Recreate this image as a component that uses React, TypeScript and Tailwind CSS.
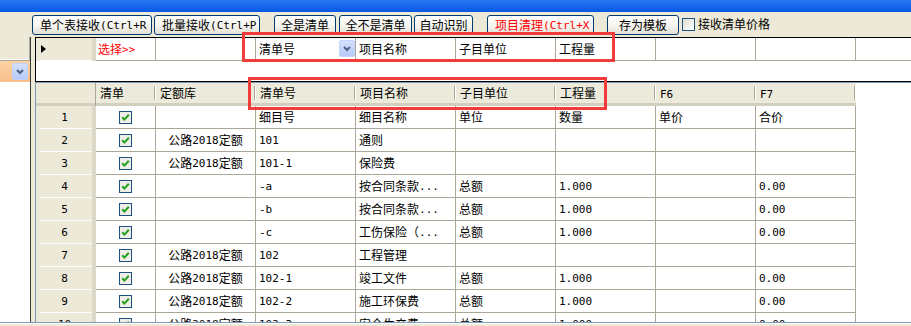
import clsx from "clsx";

type Row = {
    n: number;
    lib?: string;
    code: string;
    name: string;
    unit?: string;
    qty?: string;
    price?: string;
    total?: string;
};

const rows: Row[] = [
    { n: 1, code: "细目号", name: "细目名称", unit: "单位", qty: "数量", price: "单价", total: "合价" },
    { n: 2, lib: "公路2018定额", code: "101", name: "通则" },
    { n: 3, lib: "公路2018定额", code: "101-1", name: "保险费" },
    { n: 4, code: "-a", name: "按合同条款...", unit: "总额", qty: "1.000", total: "0.00" },
    { n: 5, code: "-b", name: "按合同条款...", unit: "总额", qty: "1.000", total: "0.00" },
    { n: 6, code: "-c", name: "工伤保险（...", unit: "总额", qty: "1.000", total: "0.00" },
    { n: 7, lib: "公路2018定额", code: "102", name: "工程管理" },
    { n: 8, lib: "公路2018定额", code: "102-1", name: "竣工文件", unit: "总额", qty: "1.000", total: "0.00" },
    { n: 9, lib: "公路2018定额", code: "102-2", name: "施工环保费", unit: "总额", qty: "1.000", total: "0.00" },
    { n: 10, lib: "公路2018定额", code: "102-3", name: "安全生产费", unit: "总额", qty: "1.000", total: "0.00" },
];

const headers = ["清单号", "项目名称", "子目单位", "工程量", "F6", "F7"];

// ascii runs get a narrow mono face, the rest stays in the CJK face
const Txt = ({ s }: { s: string }) => {
    const parts = s.split(/([\x20-\x7E]+)/).filter(Boolean);
    return (
        <>
            {parts.map((p, i) =>
                /^[\x20-\x7E]+$/.test(p) ? (
                    <span key={i} className="font-['DejaVu_Sans_Mono',monospace] text-[11px]">
                        {p}
                    </span>
                ) : (
                    <span key={i}>{p}</span>
                )
            )}
        </>
    );
};

const XpButton = ({ label, className, red, left }: { label: string; className: string; red?: boolean; left?: boolean }) => (
    <div
        className={clsx(
            "h-[20px] shrink-0 flex items-center overflow-hidden whitespace-nowrap rounded-[3px] border border-[#003C74] bg-[linear-gradient(to_bottom,#FFFFFF,#F5F4EF_55%,#E2DFD4)]",
            left ? "justify-start pl-[7px]" : "justify-center",
            red ? "text-[#FF0000]" : "text-black",
            className
        )}
    >
        <Txt s={label} />
    </div>
);

const Check = () => (
    <svg width="13" height="13" viewBox="0 0 13 13">
        <rect x="0.5" y="0.5" width="12" height="12" fill="#EFEEE6" stroke="#1C5180" />
        <path d="M3.2 6.2 L5.4 8.6 L9.8 3.8" fill="none" stroke="#21A121" strokeWidth="2" />
    </svg>
);

const DropBtn = () => (
    <div className="w-[16px] h-[17px] shrink-0 flex items-center justify-center rounded-[2px] border border-[#C3D3FD] bg-[linear-gradient(to_bottom,#D4E0FC,#B6CAF7)]">
        <svg width="10" height="8" viewBox="0 0 10 8">
            <path d="M2 2 L5 5 L8 2" fill="none" stroke="#4D6185" strokeWidth="2" />
        </svg>
    </div>
);

const RowHead = ({ children }: { children?: React.ReactNode }) => (
    <div className="w-[60px] shrink-0 flex flex-col bg-[#ECE9D8] shadow-[inset_-4px_0_0_#DCD8C8]">
        <div className="flex-1 flex items-center justify-center pr-[3px]">{children}</div>
        <div className="h-px ml-[4px] mr-[5px] bg-white" />
    </div>
);

const cell = "shrink-0 flex items-center border-r border-b border-[#ACA899] overflow-hidden whitespace-nowrap";

export default function App() {
    return (
        <div className="relative w-[911px] h-[326px] overflow-hidden bg-[#ECE9D8] flex flex-col font-['Noto_Sans_CJK_SC',sans-serif] text-[12px] leading-none text-black">
            {/* title bar */}
            <div className="h-[12px] shrink-0 bg-[linear-gradient(to_bottom,#2A78F2,#0757E4)]" />

            {/* toolbar */}
            <div className="h-[25px] shrink-0 flex items-start pt-[3px]">
                <XpButton label="单个表接收(Ctrl+R" className="w-[120px] ml-[32px]" left />
                <XpButton label="批量接收(Ctrl+P" className="w-[106px] ml-[2px]" left />
                <XpButton label="全是清单" className="w-[62px] ml-[14px]" />
                <XpButton label="全不是清单" className="w-[73px] ml-[3px]" />
                <XpButton label="自动识别" className="w-[59px] ml-[2px]" />
                <XpButton label="项目清理(Ctrl+X" className="w-[107px] ml-[14px]" red left />
                <XpButton label="存为模板" className="w-[72px] ml-[13px]" />
                <div className="ml-[3px] mt-[3px] w-[13px] h-[13px] border border-[#1C5180] bg-[linear-gradient(135deg,#DCDCD7,#FFFFFF)]" />
                <span className="ml-[3px] mt-[3px]">接收清单价格</span>
            </div>

            {/* content */}
            <div className="flex-1 min-h-0 flex">
                {/* left panel */}
                <div className="w-[31px] shrink-0 flex flex-col bg-white border-r border-[#3C3C3C]">
                    <div className="h-[24px] shrink-0 bg-[#ECE9D8] border-r border-b border-[#ACA899] shadow-[inset_0_-1px_0_#FFFFFF]" />
                    <div className="h-[21px] shrink-0 flex items-center justify-end pr-[2px] bg-[linear-gradient(to_bottom,#FCD2A6,#F8BE88)]">
                        <DropBtn />
                    </div>
                    <div className="flex-1" />
                </div>

                {/* splitter */}
                <div className="w-[4px] shrink-0" />

                {/* right side */}
                <div className="flex-1 min-w-0 flex flex-col">
                    {/* filter grid */}
                    <div className="h-[45px] shrink-0 bg-white border-t border-b border-l border-black">
                        <div className="h-[23px] flex">
                            <RowHead>
                                <span className="mr-auto ml-[5px] w-0 h-0 border-y-[4px] border-y-transparent border-l-[5px] border-l-black" />
                            </RowHead>
                            <div className={clsx(cell, "w-[60px] pl-[2px] text-[#FF0000]")}>
                                <Txt s="选择>>" />
                            </div>
                            <div className={clsx(cell, "w-[100px]")} />
                            <div className="w-[100px] shrink-0 flex flex-col border-r border-b border-[#ACA899]">
                                <div className="flex-1 flex items-center pl-[3px]">
                                    <span className="flex-1">清单号</span>
                                    <DropBtn />
                                </div>
                                <div className="h-px bg-[repeating-linear-gradient(to_right,#5A3A10_0_1px,#F2B060_1px_2px)]" />
                            </div>
                            {["项目名称", "子目单位", "工程量", "", "", ""].map((h, i) => (
                                <div key={i} className={clsx(cell, "w-[100px] pl-[3px]")}>
                                    {h}
                                </div>
                            ))}
                        </div>
                    </div>

                    {/* main grid */}
                    <div className="flex-1 min-h-0 overflow-hidden bg-white border-t border-l border-[#7F9DB9]">
                        {/* header */}
                        <div className="h-[23px] flex">
                            <div className="w-[60px] shrink-0 bg-[#ECE9D8] border-r border-[#ACA899] shadow-[inset_0_-3px_0_#D3CFBF]" />
                            {["清单", "定额库", ...headers].map((h, i) => (
                                <div
                                    key={h}
                                    className={clsx(
                                        "shrink-0 flex items-center pb-[3px] bg-[#EBEADB] shadow-[inset_0_-3px_0_#D3CFBF]",
                                        i === 0 ? "w-[60px]" : "w-[100px]"
                                    )}
                                >
                                    <span className="flex-1 pl-[4px]">
                                        <Txt s={h} />
                                    </span>
                                    <div className="w-[2px] h-[14px] border-l border-[#ACA899] bg-white" />
                                </div>
                            ))}
                        </div>

                        {/* rows */}
                        {rows.map((r) => (
                            <div key={r.n} className="h-[23px] flex">
                                <RowHead>
                                    <Txt s={String(r.n)} />
                                </RowHead>
                                <div className={clsx(cell, "w-[60px] justify-center")}>
                                    <Check />
                                </div>
                                <div className={clsx(cell, "w-[100px] justify-center")}>
                                    {r.lib && <Txt s={r.lib} />}
                                </div>
                                {[r.code, r.name, r.unit, r.qty, r.price, r.total].map((v, i) => (
                                    <div key={i} className={clsx(cell, "w-[100px] pl-[3px]")}>
                                        {v && <Txt s={v} />}
                                    </div>
                                ))}
                            </div>
                        ))}
                    </div>
                </div>
            </div>

            {/* bottom strip */}
            <div className="h-[4px] shrink-0 border-t border-[#7F9DB9] bg-[#ECE9D8] shadow-[inset_0_1px_0_#FFFFFF]" />

            {/* red annotation boxes */}
            <div className="absolute left-[242px] top-[32px] w-[373px] h-[30px] border-[3px] border-[#F23B3B]" />
            <div className="absolute left-[248px] top-[77px] w-[359px] h-[33px] border-[3px] border-[#F23B3B]" />
        </div>
    );
}
